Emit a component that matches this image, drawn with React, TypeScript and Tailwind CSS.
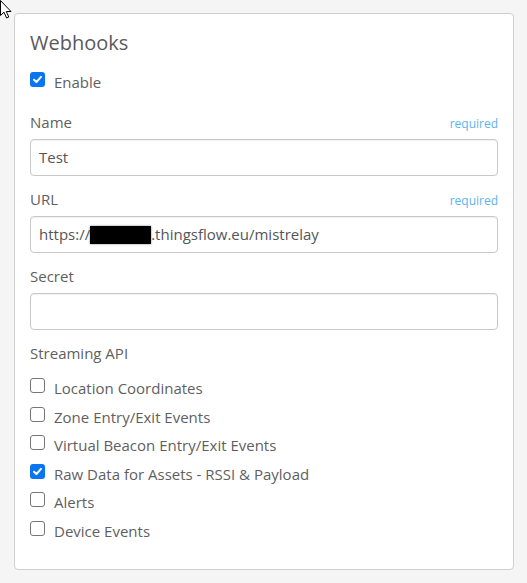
const font = { fontFamily: '"Open Sans", "Noto Sans", sans-serif' };

function Box({ checked }: { checked?: boolean }) {
  if (checked) {
    return (
      <span className="flex h-[15px] w-[15px] shrink-0 items-center justify-center rounded-[3px] bg-[#0b74f0]">
        <svg viewBox="0 0 12 12" className="h-[11px] w-[11px]">
          <path d="M2.2 6.3 L4.8 8.8 L9.8 3.2" fill="none" stroke="white" strokeWidth="2.2" strokeLinecap="round" strokeLinejoin="round" />
        </svg>
      </span>
    );
  }
  return <span className="h-[15px] w-[15px] shrink-0 rounded-[3px] border border-[#767676] bg-white" />;
}

function Check({ label, checked }: { label: string; checked?: boolean }) {
  return (
    <label className="flex h-[21px] items-start gap-[9px] text-[15px] leading-[21px] text-[#5f5f5f]">
      <Box checked={checked} />
      <span className="-mt-0">{label}</span>
    </label>
  );
}

function Field({ label, required, children }: { label: string; required?: boolean; children?: React.ReactNode }) {
  return (
    <div>
      <div className="flex h-[21px] items-baseline justify-between leading-[21px]">
        <span className="text-[15px] text-[#5f5f5f]">{label}</span>
        {required && <span className="text-[12px] text-[#5bb4f2]">required</span>}
      </div>
      <div className="mt-[6px] flex h-[37px] items-center rounded-[4px] border border-[#c8c8c8] bg-white px-[8px] text-[15px] text-[#555] shadow-[inset_0_1px_1px_rgba(0,0,0,0.06)]">
        {children}
      </div>
    </div>
  );
}

export default function App() {
  const streams = [
    { label: 'Location Coordinates' },
    { label: 'Zone Entry/Exit Events' },
    { label: 'Virtual Beacon Entry/Exit Events' },
    { label: 'Raw Data for Assets - RSSI & Payload', checked: true },
    { label: 'Alerts' },
    { label: 'Device Events' },
  ];

  return (
    <div className="relative h-[583px] w-[527px] overflow-hidden bg-[#f5f5f5] pt-[13px] pl-[14px]" style={font}>
      <div className="h-[557px] w-[500px] rounded-[4px] border border-[#cfcfcf] bg-white px-[15px] pt-[15px]">
        <h2 className="h-[27px] text-[20px] leading-[27px] text-[#5a5a5a]">Webhooks</h2>

        <div className="mt-[16px]">
          <Check label="Enable" checked />
        </div>

        <div className="mt-[19px] flex flex-col gap-[13px]">
          <Field label="Name" required>Test</Field>
          <Field label="URL" required>
            <span>https://</span>
            <span className="inline-block h-[18px] w-[61px] bg-black shadow-[0_0_2px_rgba(0,0,0,0.5)]" />
            <span>.thingsflow.eu/mistrelay</span>
          </Field>
          <Field label="Secret" />
          <div className="h-[21px] text-[15px] leading-[21px] text-[#5f5f5f]">Streaming API</div>
        </div>

        <div className="mt-[14px] flex flex-col gap-[7.6px]">
          {streams.map(s => (
            <Check key={s.label} label={s.label} checked={s.checked} />
          ))}
        </div>
      </div>

      <svg className="absolute left-0 top-0 h-[19px] w-[13px]" viewBox="0 0 13 19">
        <path d="M0.5 0.5 L0.5 15.5 L4 12.2 L6.6 18 L8.8 17 L6.3 11.5 L11 11.5 Z" fill="white" stroke="black" strokeWidth="1" strokeLinejoin="round" />
      </svg>
    </div>
  );
}
